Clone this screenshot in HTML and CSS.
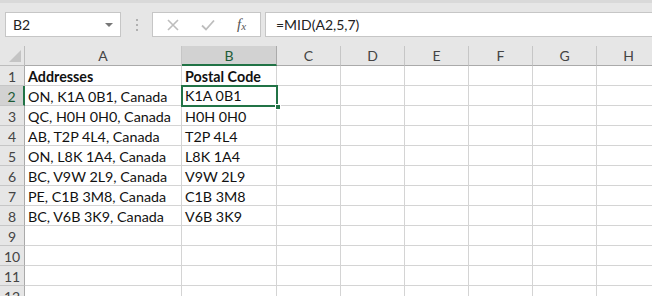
FILE: index.html
```html
<!DOCTYPE html>
<html>
<head>
<meta charset="utf-8">
<link rel="stylesheet" href="styles.css">
</head>
<body>
<div class="toolbar">
  <div class="namebox"><span class="nb-text">B2</span><span class="nb-arrow"></span></div>
  <div class="dots"><i></i><i></i><i></i></div>
  <div class="fbuttons">
    <svg class="ico" width="16" height="16" viewBox="0 0 16 16"><path d="M3 3 L13 13 M13 3 L3 13" stroke="#bdbdbd" stroke-width="1.6" fill="none"/></svg>
    <svg class="ico" width="16" height="16" viewBox="0 0 16 16"><path d="M2 8.5 L6 12.5 L14 3.5" stroke="#bdbdbd" stroke-width="1.8" fill="none"/></svg>
    <span class="fx"><i>f</i><sub>x</sub></span>
  </div>
  <div class="formula">=MID(A2,5,7)</div>
</div>
<div class="sheet">
  <div class="corner"><span class="tri"></span></div>
  <div class="ch">A</div>
  <div class="ch sel">B</div>
  <div class="ch">C</div>
  <div class="ch">D</div>
  <div class="ch">E</div>
  <div class="ch">F</div>
  <div class="ch">G</div>
  <div class="ch">H</div>

  <div class="rh">1</div><div class="c b">Addresses</div><div class="c b">Postal Code</div><div class="c"></div><div class="c"></div><div class="c"></div><div class="c"></div><div class="c"></div><div class="c"></div>
  <div class="rh sel">2</div><div class="c">ON, K1A 0B1, Canada</div><div class="c active">K1A 0B1<span class="handle"></span></div><div class="c"></div><div class="c"></div><div class="c"></div><div class="c"></div><div class="c"></div><div class="c"></div>
  <div class="rh">3</div><div class="c">QC, H0H 0H0, Canada</div><div class="c">H0H 0H0</div><div class="c"></div><div class="c"></div><div class="c"></div><div class="c"></div><div class="c"></div><div class="c"></div>
  <div class="rh">4</div><div class="c">AB, T2P 4L4, Canada</div><div class="c">T2P 4L4</div><div class="c"></div><div class="c"></div><div class="c"></div><div class="c"></div><div class="c"></div><div class="c"></div>
  <div class="rh">5</div><div class="c">ON, L8K 1A4, Canada</div><div class="c">L8K 1A4</div><div class="c"></div><div class="c"></div><div class="c"></div><div class="c"></div><div class="c"></div><div class="c"></div>
  <div class="rh">6</div><div class="c">BC, V9W 2L9, Canada</div><div class="c">V9W 2L9</div><div class="c"></div><div class="c"></div><div class="c"></div><div class="c"></div><div class="c"></div><div class="c"></div>
  <div class="rh">7</div><div class="c">PE, C1B 3M8, Canada</div><div class="c">C1B 3M8</div><div class="c"></div><div class="c"></div><div class="c"></div><div class="c"></div><div class="c"></div><div class="c"></div>
  <div class="rh">8</div><div class="c">BC, V6B 3K9, Canada</div><div class="c">V6B 3K9</div><div class="c"></div><div class="c"></div><div class="c"></div><div class="c"></div><div class="c"></div><div class="c"></div>
  <div class="rh">9</div><div class="c"></div><div class="c"></div><div class="c"></div><div class="c"></div><div class="c"></div><div class="c"></div><div class="c"></div><div class="c"></div>
  <div class="rh">10</div><div class="c"></div><div class="c"></div><div class="c"></div><div class="c"></div><div class="c"></div><div class="c"></div><div class="c"></div><div class="c"></div>
  <div class="rh">11</div><div class="c"></div><div class="c"></div><div class="c"></div><div class="c"></div><div class="c"></div><div class="c"></div><div class="c"></div><div class="c"></div>
  <div class="rh">12</div><div class="c"></div><div class="c"></div><div class="c"></div><div class="c"></div><div class="c"></div><div class="c"></div><div class="c"></div><div class="c"></div>
</div>
</body>
</html>
```

FILE: styles.css
```css
* { box-sizing: border-box; }
html, body { margin: 0; padding: 0; }
body {
  width: 652px;
  height: 296px;
  overflow: hidden;
  background: #ffffff;
  font-family: Lato, "Liberation Sans", sans-serif;
  color: #000;
}
.toolbar {
  height: 46px;
  background: #e6e6e6;
  border-top: 3px solid #d9d9d9;
  display: flex;
  align-items: center;
  padding: 0 0 0 5px;
}
.namebox {
  width: 116px;
  height: 25px;
  background: #fff;
  border: 1px solid #c6c6c6;
  display: flex;
  align-items: center;
  justify-content: space-between;
  padding: 0 7px 0 7px;
  font-size: 14px;
  color: #222;
}
.nb-arrow {
  width: 0; height: 0;
  border-left: 4px solid transparent;
  border-right: 4px solid transparent;
  border-top: 4px solid #777;
}
.dots {
  width: 31px;
  display: flex;
  flex-direction: column;
  align-items: center;
  gap: 3px;
}
.dots i {
  width: 2px; height: 2px;
  background: #b0b0b0;
  display: block;
}
.fbuttons {
  width: 109px;
  height: 25px;
  background: #fff;
  border: 1px solid #c6c6c6;
  display: flex;
  align-items: center;
  padding-left: 12px;
  gap: 19px;
}
.fx {
  font-family: "Liberation Serif", serif;
  font-size: 15px;
  color: #555;
  margin-left: 2px;
}
.fx sub { font-size: 11px; font-style: italic; vertical-align: -1px; }
.formula {
  flex: 1;
  height: 25px;
  margin-left: 4px;
  background: #fff;
  border: 1px solid #c6c6c6;
  border-right: none;
  display: flex;
  align-items: center;
  padding-left: 10px;
  font-size: 14px;
  color: #222;
}
.sheet {
  display: grid;
  grid-template-columns: 25px 157px 95px repeat(6, 64px);
  grid-auto-rows: 20px;
  font-size: 14.3px;
}
.corner {
  background: #e6e6e6;
  border-right: 1px solid #bdbdbd;
  border-bottom: 1px solid #bdbdbd;
  position: relative;
}
.tri {
  position: absolute;
  right: 3px; bottom: 3px;
  width: 0; height: 0;
  border-left: 12px solid transparent;
  border-bottom: 12px solid #c4c4c4;
}
.ch {
  background: #e6e6e6;
  border-right: 1px solid #c6c6c6;
  border-bottom: 1px solid #aaaaaa;
  text-align: center;
  color: #444;
  font-size: 14px;
  line-height: 19px;
}
.ch.sel {
  background: #d2d2d2;
  color: #1d5b37;
  border-bottom: 2px solid #217346;
  border-right-color: #aaaaaa;
}
.rh {
  background: #e6e6e6;
  border-right: 1px solid #aaaaaa;
  border-bottom: 1px solid #c6c6c6;
  text-align: center;
  color: #444;
  font-size: 14px;
  line-height: 21px;
}
.rh.sel {
  background: #d2d2d2;
  color: #1d5b37;
  border-right: 2px solid #217346;
}
.c {
  border-right: 1px solid #d4d4d4;
  border-bottom: 1px solid #d4d4d4;
  padding: 0 0 0 3px;
  line-height: 21px;
  white-space: nowrap;
  overflow: hidden;
  color: #111;
}
.c.b { font-weight: bold; }
.active {
  position: relative;
  overflow: visible;
  box-shadow: inset 0 0 0 2px #217346;
  margin: -1px 0 0 -1px;
  padding-left: 4px;
  line-height: 22px;
  border: none;
  width: 97px;
  height: 22px;
  z-index: 2;
}
.handle {
  position: absolute;
  right: -3px; bottom: -3px;
  width: 6px; height: 6px;
  background: #217346;
  border: 1px solid #fff;
}
```
